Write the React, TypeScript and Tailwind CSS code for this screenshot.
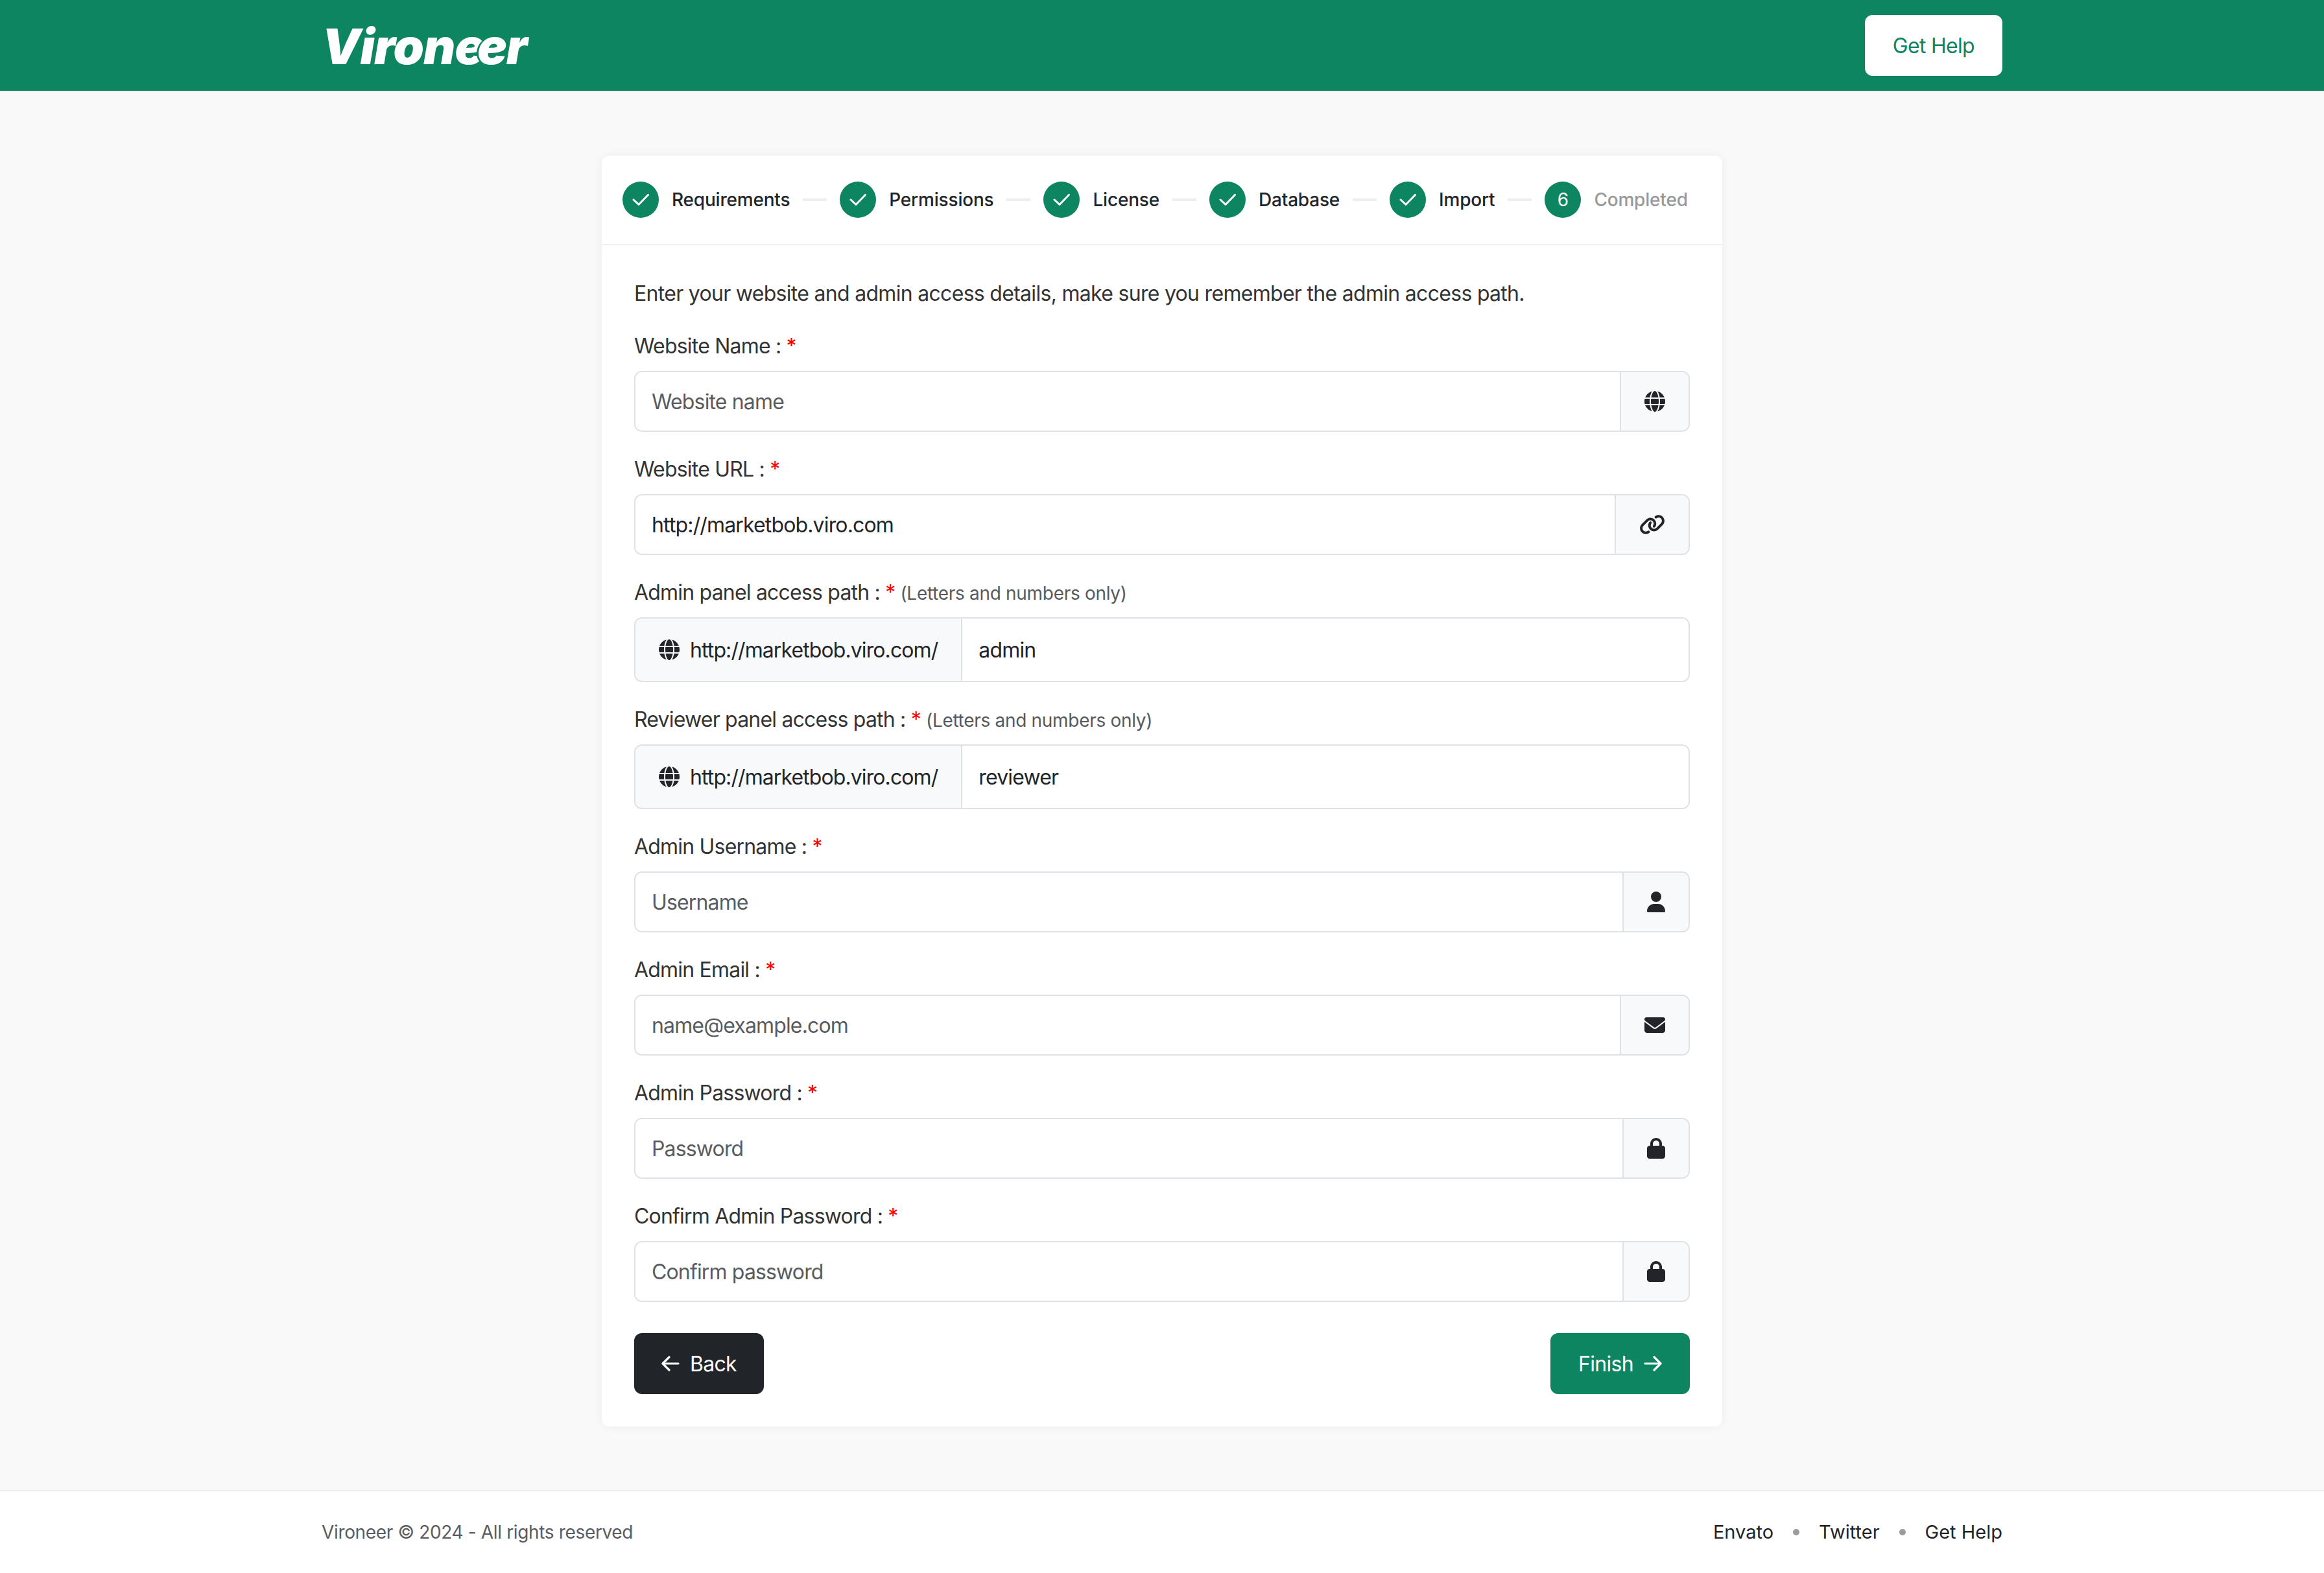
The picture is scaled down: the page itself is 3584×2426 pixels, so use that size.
import { FaGlobe, FaLink, FaUser, FaEnvelope, FaLock } from "react-icons/fa6";

const steps = ["Requirements", "Permissions", "License", "Database", "Import"];

function Check() {
  return (
    <svg className="h-[18px] w-[26px]" viewBox="0 0 26 18" fill="none" stroke="white" strokeWidth="3" strokeLinecap="round" strokeLinejoin="round">
      <polyline points="2,9 10,16.5 24.5,1.5" />
    </svg>
  );
}

function Arrow({ flip }: { flip?: boolean }) {
  return (
    <svg className={flip ? "h-[24px] w-[28px] -scale-x-100" : "h-[24px] w-[28px]"} viewBox="0 0 28 24" fill="none" stroke="white" strokeWidth="3.2" strokeLinecap="round" strokeLinejoin="round">
      <path d="M2 12H26M16 2L26 12L16 22" />
    </svg>
  );
}

function Label({ text, note }: { text: string; note?: string }) {
  return (
    <div className="mb-4 h-12 whitespace-nowrap text-[32px] leading-[52px] tracking-[-0.8px] text-[#333333]">
      {text} <span className="text-[#ff0000]">*</span>
      {note && <span className="ml-2 text-[28px] tracking-[-0.3px] text-[#555a5e]">{note}</span>}
    </div>
  );
}

function IconField({ label, placeholder, value, icon }: { label: string; placeholder: string; value?: string; icon: React.ReactNode }) {
  return (
    <div className="mb-8">
      <Label text={label} />
      <div className="flex h-[94px] rounded-xl border-2 border-[#dee2e6]">
        <input
          readOnly
          defaultValue={value}
          placeholder={placeholder}
          className="min-w-0 flex-1 rounded-l-[10px] bg-white px-[25px] pt-[2px] text-[32px] tracking-[-0.85px] text-[#212529] outline-none placeholder:text-[#595c5f]"
        />
        <div className="flex items-center rounded-r-[10px] border-l-2 border-[#dee2e6] bg-[#f8f9fa] px-9 text-[#212529]">{icon}</div>
      </div>
    </div>
  );
}

function PathField({ label, value }: { label: string; value: string }) {
  return (
    <div className="mb-8">
      <Label text={label} note="(Letters and numbers only)" />
      <div className="flex h-[100px] rounded-xl border-2 border-[#dee2e6]">
        <div className="flex items-center gap-4 rounded-l-[10px] border-r-2 border-[#dee2e6] bg-[#f8f9fa] px-9 text-[32px] tracking-[-0.9px] text-[#212529]">
          <FaGlobe className="h-8 w-8" />
          <span className="pt-[2px]">http://marketbob.viro.com/</span>
        </div>
        <input readOnly defaultValue={value} className="min-w-0 flex-1 rounded-r-[10px] bg-white px-[25px] pt-[2px] text-[32px] tracking-[-0.85px] text-[#212529] outline-none" />
      </div>
    </div>
  );
}

export default function App() {
  return (
    <div className="flex min-h-[2426px] flex-col bg-[#f9f9f9] font-['Inter',sans-serif] text-[#212529]">
      <header className="h-[142px] border-b-2 border-[#f0f0f0] bg-[#0c8560]">
        <div className="mx-auto flex h-[140px] w-[2640px] items-center justify-between px-6">
          <div className="whitespace-nowrap pt-[2px] text-[76px] font-black italic leading-none tracking-[-1px] text-white">
            <span>Viron</span>
            <span className="tracking-[-11px]">e</span>
            <span className="[text-shadow:-3px_0_0_#0c8560]">er</span>
          </div>
          <a className="flex h-[94px] items-center rounded-xl bg-white px-[43px] pt-[2px] text-[32px] tracking-[-0.7px] text-[#0c8560]">Get Help</a>
        </div>
      </header>

      <main className="flex-1 pt-[98px] pb-[98px]">
        <div className="mx-auto w-[1728px] rounded-xl bg-white shadow-[0_0_16px_rgba(0,0,0,0.05)]">
          <div className="flex h-[138px] items-center gap-5 border-b-2 border-[#f0f0f0] px-8">
            {steps.map((s) => (
              <div key={s} className="flex items-center gap-5">
                <div className="flex h-14 w-14 items-center justify-center rounded-full bg-[#0c8560]">
                  <Check />
                </div>
                <span className="text-[28px] font-medium tracking-[-0.2px] text-[#212529]">{s}</span>
                <div className="h-1 w-[37px] bg-[#eeeeee]" />
              </div>
            ))}
            <div className="flex items-center gap-5">
              <div className="flex h-14 w-14 items-center justify-center rounded-full bg-[#0c8560] text-[28px] text-white">6</div>
              <span className="text-[28px] font-medium tracking-[-0.2px] text-[#999999]">Completed</span>
            </div>
          </div>

          <div className="p-[50px]">
            <p className="mb-8 h-12 text-[32px] leading-[50px] tracking-[-0.7px] text-[#333333]">Enter your website and admin access details, make sure you remember the admin access path.</p>
            <IconField label="Website Name :" placeholder="Website name" icon={<FaGlobe className="h-8 w-8" />} />
            <IconField label="Website URL :" placeholder="Website URL" value="http://marketbob.viro.com" icon={<FaLink className="h-8 w-10" />} />
            <PathField label="Admin panel access path :" value="admin" />
            <PathField label="Reviewer panel access path :" value="reviewer" />
            <IconField label="Admin Username :" placeholder="Username" icon={<FaUser className="h-8 w-7" />} />
            <IconField label="Admin Email :" placeholder="name@example.com" icon={<FaEnvelope className="h-8 w-8" />} />
            <IconField label="Admin Password :" placeholder="Password" icon={<FaLock className="h-8 w-7" />} />
            <IconField label="Confirm Admin Password :" placeholder="Confirm password" icon={<FaLock className="h-8 w-7" />} />
            <div className="mt-12 flex justify-between">
              <button className="flex h-[94px] items-center gap-[16px] rounded-xl bg-[#212529] px-[42px] text-[32px] tracking-[-0.7px] text-white">
                <Arrow flip />
                <span className="pt-[2px]">Back</span>
              </button>
              <button className="flex h-[94px] items-center gap-[16px] rounded-xl bg-[#0c8560] px-[43px] text-[32px] tracking-[-0.7px] text-white">
                <span className="pt-[2px]">Finish</span>
                <Arrow />
              </button>
            </div>
          </div>
        </div>
      </main>

      <footer className="border-t-2 border-[#eeeeee] bg-white">
        <div className="mx-auto flex h-[126px] w-[2640px] items-center justify-between px-6">
          <span className="text-[28px] tracking-[-0.35px] text-[#595c5f]">Vironeer © 2024 - All rights reserved</span>
          <div className="flex items-center gap-[30px] text-[29px] text-[#212529]">
            <a>Envato</a>
            <span className="h-[10px] w-[10px] rounded-full bg-[#9c9c9c]" />
            <a>Twitter</a>
            <span className="h-[10px] w-[10px] rounded-full bg-[#9c9c9c]" />
            <a>Get Help</a>
          </div>
        </div>
      </footer>
    </div>
  );
}
